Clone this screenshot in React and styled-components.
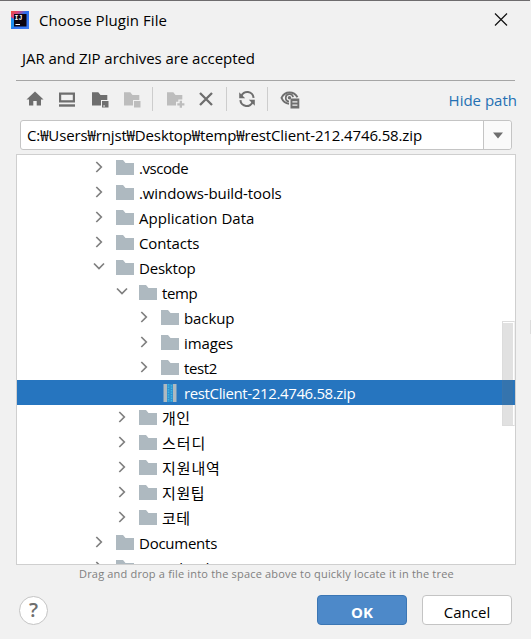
import React, { useState } from 'react';
import styled, { createGlobalStyle } from 'styled-components';

const GlobalStyle = createGlobalStyle`
    * {
        box-sizing: border-box;
    }
    body {
        margin: 0;
        overflow: hidden;
        font-family: 'Open Sans', 'Noto Sans CJK KR', sans-serif;
        font-size: 15px;
        color: #000;
    }
`;

const Window = styled.div`
    width: 531px;
    height: 639px;
    padding-right: 1px;
    background: linear-gradient(#f1f1f1 320px, #dcdcdc 320px, #dcdcdc 334px, #f1f1f1 334px);
`;

const Dialog = styled.div`
    display: flex;
    flex-direction: column;
    height: 100%;
    padding: 0 15px 0 16px;
    border-top: 1px solid #6e6c6e;
    background: #f1f1f1;
`;

const TitleBar = styled.div`
    display: flex;
    align-items: center;
    height: 37px;
    margin-left: -5px;
    padding-right: 7px;
`;

const Title = styled.span`
    flex: 1;
    margin-left: 10px;
    letter-spacing: 0.06px;
`;

const Description = styled.div`
    height: 42px;
    padding: 0 6px;
    line-height: 41px;
    letter-spacing: -0.05px;
`;

const Toolbar = styled.div`
    display: flex;
    align-items: center;
    height: 40px;
    padding: 0 0 3px 8px;
    border-top: 1px solid #a6a6a6;
`;

const ToolButton = styled.span`
    display: flex;
    width: 22px;
    height: 22px;
    margin-right: ${props => props.$gap || 0}px;
    color: ${props => (props.$disabled ? '#bdbdbd' : '#6e6e6e')};
`;

const Separator = styled.span`
    width: 1px;
    height: 24px;
    margin-right: ${props => props.$gap}px;
    background: #cdcdcd;
`;

const HidePath = styled.span`
    margin-left: auto;
    margin-right: -2px;
    padding-top: 2px;
    color: #2470b3;
`;

const PathField = styled.div`
    display: flex;
    flex: none;
    width: 492px;
    height: 30px;
    margin: 0 0 4px 4px;
    border: 1px solid #c4c4c4;
    border-radius: 3px;
    background: #fff;
`;

const PathText = styled.span`
    flex: 1;
    padding-left: 6px;
    line-height: 29px;
    white-space: nowrap;
    letter-spacing: -0.13px;
`;

const PathArrow = styled.span`
    display: flex;
    align-items: center;
    justify-content: center;
    width: 28px;
    border-left: 1px solid #c4c4c4;
    border-radius: 0 3px 3px 0;
    background: #fafafa;
`;

const Tree = styled.div`
    position: relative;
    flex: none;
    height: 411px;
    width: 500px;
    overflow: hidden;
    border: 1px solid #cfcfcf;
    background: #fff;
`;

const Row = styled.div`
    display: flex;
    align-items: center;
    height: 25px;
    padding-left: ${props => 74 + Math.round(props.$level * 22.5)}px;
    background: ${props => (props.$selected ? '#2675bf' : 'transparent')};
    color: ${props => (props.$selected ? '#fff' : '#000')};
`;

const Toggle = styled.span`
    display: flex;
    justify-content: center;
    width: 16px;
    margin-right: 9px;
    padding-bottom: 2px;
`;

const RowName = styled.span`
    margin-left: 5px;
    padding-top: 2px;
    white-space: nowrap;
    line-height: 23px;
    letter-spacing: ${props => props.$spacing || -0.1}px;
`;

const Scrollbar = styled.div`
    position: absolute;
    top: 166px;
    right: 0;
    width: 13px;
    height: 105px;
    padding: 1px 1px 0 0;
    border: 1px solid rgba(120, 120, 120, 0.25);
    border-right-color: rgba(120, 120, 120, 0.1);
`;

const Thumb = styled.div`
    height: 100%;
    background: rgba(115, 115, 115, 0.21);
`;

const Hint = styled.div`
    height: 30px;
    padding-left: 63px;
    font-size: 11px;
    line-height: 18px;
    color: #808080;
    white-space: nowrap;
    letter-spacing: 0.18px;
`;

const Footer = styled.div`
    display: flex;
    align-items: center;
    height: 30px;
    padding: 0 3px;
`;

const HelpButton = styled.button`
    width: 29px;
    height: 29px;
    margin-right: auto;
    padding: 0;
    border: 1px solid #c4c4c4;
    border-radius: 50%;
    background: #fff;
    color: #6e6e6e;
    font: 600 20px/26px 'Open Sans', sans-serif;
`;

const Button = styled.button`
    width: 90px;
    height: 30px;
    margin-left: 15px;
    padding: 3px 0 0;
    border: 1px solid ${props => (props.$primary ? '#3b76b4' : '#c4c4c4')};
    border-radius: 4px;
    background: ${props => (props.$primary ? '#4d89c9' : '#fff')};
    color: ${props => (props.$primary ? '#fff' : '#000')};
    font: ${props => (props.$primary ? 700 : 400)} 15px 'Open Sans', sans-serif;
`;

const Logo = () => (
    <svg width="18" height="18" viewBox="0 0 18 18">
        <defs>
            <linearGradient id="logo" x1="0" y1="0" x2="1" y2="1">
                <stop offset="0" stopColor="#f0503c" />
                <stop offset="0.22" stopColor="#d8457c" />
                <stop offset="0.45" stopColor="#2a6ff0" />
                <stop offset="1" stopColor="#3f7df5" />
            </linearGradient>
        </defs>
        <rect width="18" height="18" fill="url(#logo)" />
        <path d="M0 6 4 9v6L0 18z" fill="#1b8df0" />
        <rect x="3" y="3" width="12.5" height="12.5" fill="#0b0410" />
        <text x="3.6" y="8.7" fill="#fff" fontSize="6.5" fontWeight="700" fontFamily="Liberation Mono, monospace">IJ</text>
        <rect x="4.5" y="13" width="4.5" height="1" fill="#fff" />
    </svg>
);

const Glyph = ({ children }) => (
    <svg width="22" height="22" viewBox="0 0 22 22" fill="currentColor">{children}</svg>
);

const HomeIcon = () => (
    <Glyph><path d="M11 3.5 19.5 11.5H17V17.5H12.7V13H9.3V17.5H5V11.5H2.5Z" /></Glyph>
);

const DesktopIcon = () => (
    <Glyph>
        <path fillRule="evenodd" d="M3 4.5H19V14.5H3ZM5.2 6.7V12.3H16.8V6.7Z" />
        <path d="M3 16.3H19V18.7H3Z" />
    </Glyph>
);

const ProjectIcon = () => (
    <Glyph>
        <path d="M3 4.3H9.3L11.5 7H18.3V12H12V17.5H3Z" />
        <path fillRule="evenodd" d="M13 13H19.5V19.5H13ZM14.2 17.6V18.6H16V17.6Z" />
    </Glyph>
);

const ModuleIcon = () => (
    <Glyph>
        <path d="M3 4.3H9.3L11.5 7H18.3V12H12V17.5H3Z" />
        <path d="M13 13H19.5V19.5H13Z" />
    </Glyph>
);

const NewFolderIcon = () => (
    <Glyph>
        <path d="M3 4.3H9.3L11.5 7H18.3V11.5H14.3V13.8H12V17.5H3Z" />
        <path d="M15.7 12.8H18V15.2H20.4V17.4H18V19.8H15.7V17.4H13.3V15.2H15.7Z" />
    </Glyph>
);

const DeleteIcon = () => (
    <Glyph><path d="M5 5 17 17M17 5 5 17" stroke="currentColor" strokeWidth="2.3" fill="none" /></Glyph>
);

const RefreshIcon = () => (
    <Glyph>
        <path d="M5.3 8.4A6.3 6.3 0 0 1 17.6 9.8M16.7 13.6A6.3 6.3 0 0 1 4.4 12.2" stroke="currentColor" strokeWidth="2.1" fill="none" />
        <path d="M3.2 4.2V10.2H9.2ZM18.8 17.8V11.8H12.8Z" />
    </Glyph>
);

const HiddenFilesIcon = () => (
    <Glyph>
        <path d="M10 15.7C6.5 15.2 3.7 12.6 2.5 9.8 4 6.6 7 4.5 10.5 4.5S17 6.6 18.5 9.3" stroke="currentColor" strokeWidth="1.9" fill="none" />
        <path d="M10 13.5A3.7 3.7 0 1 1 14.1 9.2" stroke="currentColor" strokeWidth="1.7" fill="none" />
        <circle cx="10.5" cy="9.8" r="1.7" />
        <path fillRule="evenodd" d="M11.5 10.5H20.3V20.6H11.5ZM13.4 13.2V14.5H18.4V13.2ZM13.4 16.4V17.7H18.4V16.4Z" />
    </Glyph>
);

const FolderIcon = ({ link }) => (
    <svg width="18" height="17" viewBox="0 0 18 17" overflow="visible">
        <path d="M0 1H7L9.5 4H18V16H0Z" fill="#aeb9c0" />
        {link && (
            <g>
                <rect x="10" y="-1" width="9" height="9" fill="#8c979f" />
                <path d="M12 1H17V6M17 1 11.5 6.5" stroke="#31383d" strokeWidth="1.2" fill="none" />
            </g>
        )}
    </svg>
);

const ArchiveIcon = () => (
    <svg width="18" height="18" viewBox="0 0 18 18">
        <path d="M2.5 0H6V18H2.5ZM12 0H15.5V18H12Z" fill="#aeb9c0" />
        <path d="M6 0H12V18H6Z" fill="#2f8fd0" />
        <path d="M7.5 0V18M10.5 1V18" stroke="#40b6e0" strokeWidth="1.5" strokeDasharray="1.5 1" />
    </svg>
);

const Chevron = ({ open }) => (
    <svg width="12" height="12" viewBox="0 0 12 12" fill="none" stroke="#7f7f7f" strokeWidth="1.7">
        <path d={open ? 'M1 2.5 6 7.5 11 2.5' : 'M3.3 1 8.3 6 3.3 11'} />
    </svg>
);

const files = [
    { name: '.vscode', level: 0, spacing: -0.45 },
    { name: '.windows-build-tools', level: 0 },
    { name: 'Application Data', level: 0, spacing: 0.02 },
    { name: 'Contacts', level: 0 },
    { name: 'Desktop', level: 0, open: true, spacing: -0.2 },
    { name: 'temp', level: 1, open: true, spacing: -0.4 },
    { name: 'backup', level: 2 },
    { name: 'images', level: 2 },
    { name: 'test2', level: 2, spacing: -0.4 },
    { name: 'restClient-212.4746.58.zip', level: 2, archive: true, spacing: -0.37 },
    { name: '개인', level: 1, spacing: 0.4 },
    { name: '스터디', level: 1, spacing: 0.9 },
    { name: '지원내역', level: 1, spacing: 0.9 },
    { name: '지원팁', level: 1, spacing: 0.6 },
    { name: '코테', level: 1, spacing: 0.4 },
    { name: 'Documents', level: 0, spacing: -0.25 },
    { name: 'Downloads', level: 0 },
];

export default () => {
    const [selected, setSelected] = useState('restClient-212.4746.58.zip');

    return (
        <Window>
            <GlobalStyle />
            <Dialog>
                <TitleBar>
                    <Logo />
                    <Title>Choose Plugin File</Title>
                    <svg width="14" height="14" viewBox="0 0 14 14">
                        <path d="M1 .5 13 12.5M13 .5 1 12.5" stroke="#111" strokeWidth="1.2" />
                    </svg>
                </TitleBar>
                <Description>JAR and ZIP archives are accepted</Description>
                <Toolbar>
                    <ToolButton $gap={10}><HomeIcon /></ToolButton>
                    <ToolButton $gap={11}><DesktopIcon /></ToolButton>
                    <ToolButton $gap={10}><ProjectIcon /></ToolButton>
                    <ToolButton $gap={9} $disabled><ModuleIcon /></ToolButton>
                    <Separator $gap={11} />
                    <ToolButton $gap={9} $disabled><NewFolderIcon /></ToolButton>
                    <ToolButton $gap={9}><DeleteIcon /></ToolButton>
                    <Separator $gap={9} />
                    <ToolButton $gap={9}><RefreshIcon /></ToolButton>
                    <Separator $gap={11} />
                    <ToolButton><HiddenFilesIcon /></ToolButton>
                    <HidePath>Hide path</HidePath>
                </Toolbar>
                <PathField>
                    <PathText>C:₩Users₩rnjst₩Desktop₩temp₩restClient-212.4746.58.zip</PathText>
                    <PathArrow>
                        <svg width="12" height="7" viewBox="0 0 12 7">
                            <path d="M1 .5H11L6 6.5Z" fill="#6e6e6e" />
                        </svg>
                    </PathArrow>
                </PathField>
                <Tree>
                    {files.map(file => (
                        <Row
                            key={file.name}
                            $level={file.level}
                            $selected={file.name === selected}
                            onClick={() => setSelected(file.name)}
                        >
                            <Toggle>{!file.archive && <Chevron open={file.open} />}</Toggle>
                            {file.archive ? <ArchiveIcon /> : <FolderIcon link={file.link} />}
                            <RowName $spacing={file.spacing}>{file.name}</RowName>
                        </Row>
                    ))}
                    <Scrollbar>
                        <Thumb />
                    </Scrollbar>
                </Tree>
                <Hint>Drag and drop a file into the space above to quickly locate it in the tree</Hint>
                <Footer>
                    <HelpButton>?</HelpButton>
                    <Button $primary>OK</Button>
                    <Button>Cancel</Button>
                </Footer>
            </Dialog>
        </Window>
    );
};
